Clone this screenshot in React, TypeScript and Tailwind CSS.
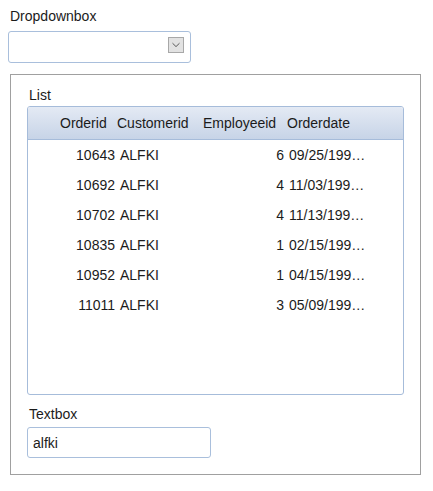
const rows = [
  { id: '10643', cust: 'ALFKI', emp: '6', date: '09/25/1997 12:00:00 AM' },
  { id: '10692', cust: 'ALFKI', emp: '4', date: '11/03/1997 12:00:00 AM' },
  { id: '10702', cust: 'ALFKI', emp: '4', date: '11/13/1997 12:00:00 AM' },
  { id: '10835', cust: 'ALFKI', emp: '1', date: '02/15/1998 12:00:00 AM' },
  { id: '10952', cust: 'ALFKI', emp: '1', date: '04/15/1998 12:00:00 AM' },
  { id: '11011', cust: 'ALFKI', emp: '3', date: '05/09/1998 12:00:00 AM' },
];

const cols = 'grid grid-cols-[28px_60px_84px_85px_84px]';

export default function App() {
  return (
    <div className="w-[433px] h-[491px] bg-white text-[14px] leading-[16px] text-[#1b1b1b] font-['Liberation_Sans',Arial,sans-serif] pt-[8px] pl-[8px]">
      <div className="ml-[2px]">Dropdownbox</div>
      <div className="mt-[7px] w-[183px] h-[32px] border border-[#a9bfdc] rounded-[3px] flex items-center justify-end pr-[6px] pb-[4px]">
        <div className="w-[16px] h-[16px] bg-[#e2e2e2] border border-[#a8a8a8] flex items-center justify-center">
          <svg width="10" height="6" viewBox="0 0 10 6" fill="none">
            <path d="M1.5 1.2 L5 4.6 L8.5 1.2" stroke="#5a5a5a" strokeWidth="1" />
          </svg>
        </div>
      </div>

      <div className="mt-[11px] ml-[2px] w-[411px] border border-[#a0a0a0] pt-[12px] pl-[16px] pb-[16px]">
        <div className="ml-[2px]">List</div>
        <div className="mt-[3px] w-[377px] h-[289px] border border-[#a6bcda] rounded-[3px] overflow-hidden">
          <div className={`${cols} h-[33px] items-center border-b border-[#a6bcda] bg-gradient-to-b from-[#e4eaf4] to-[#c7d4e7]`}>
            <div />
            <div className="pl-[4px]">Orderid</div>
            <div className="pl-[1px]">Customerid</div>
            <div className="pl-[3px]">Employeeid</div>
            <div className="pl-[2px]">Orderdate</div>
          </div>
          <div>
            {rows.map((r) => (
              <div key={r.id} className={`${cols} h-[30px] items-center`}>
                <div />
                <div className="text-right pr-[1px]">{r.id}</div>
                <div className="pl-[4px]">{r.cust}</div>
                <div className="text-right pr-[1px]">{r.emp}</div>
                <div className="pl-[4px] whitespace-nowrap overflow-hidden text-ellipsis">{r.date}</div>
              </div>
            ))}
          </div>
        </div>

        <div className="mt-[11px] ml-[2px]">Textbox</div>
        <div className="mt-[5px] w-[184px] h-[31px] border border-[#a9bfdc] rounded-[3px] flex items-center pl-[5px]">
          alfki
        </div>
      </div>
    </div>
  );
}
